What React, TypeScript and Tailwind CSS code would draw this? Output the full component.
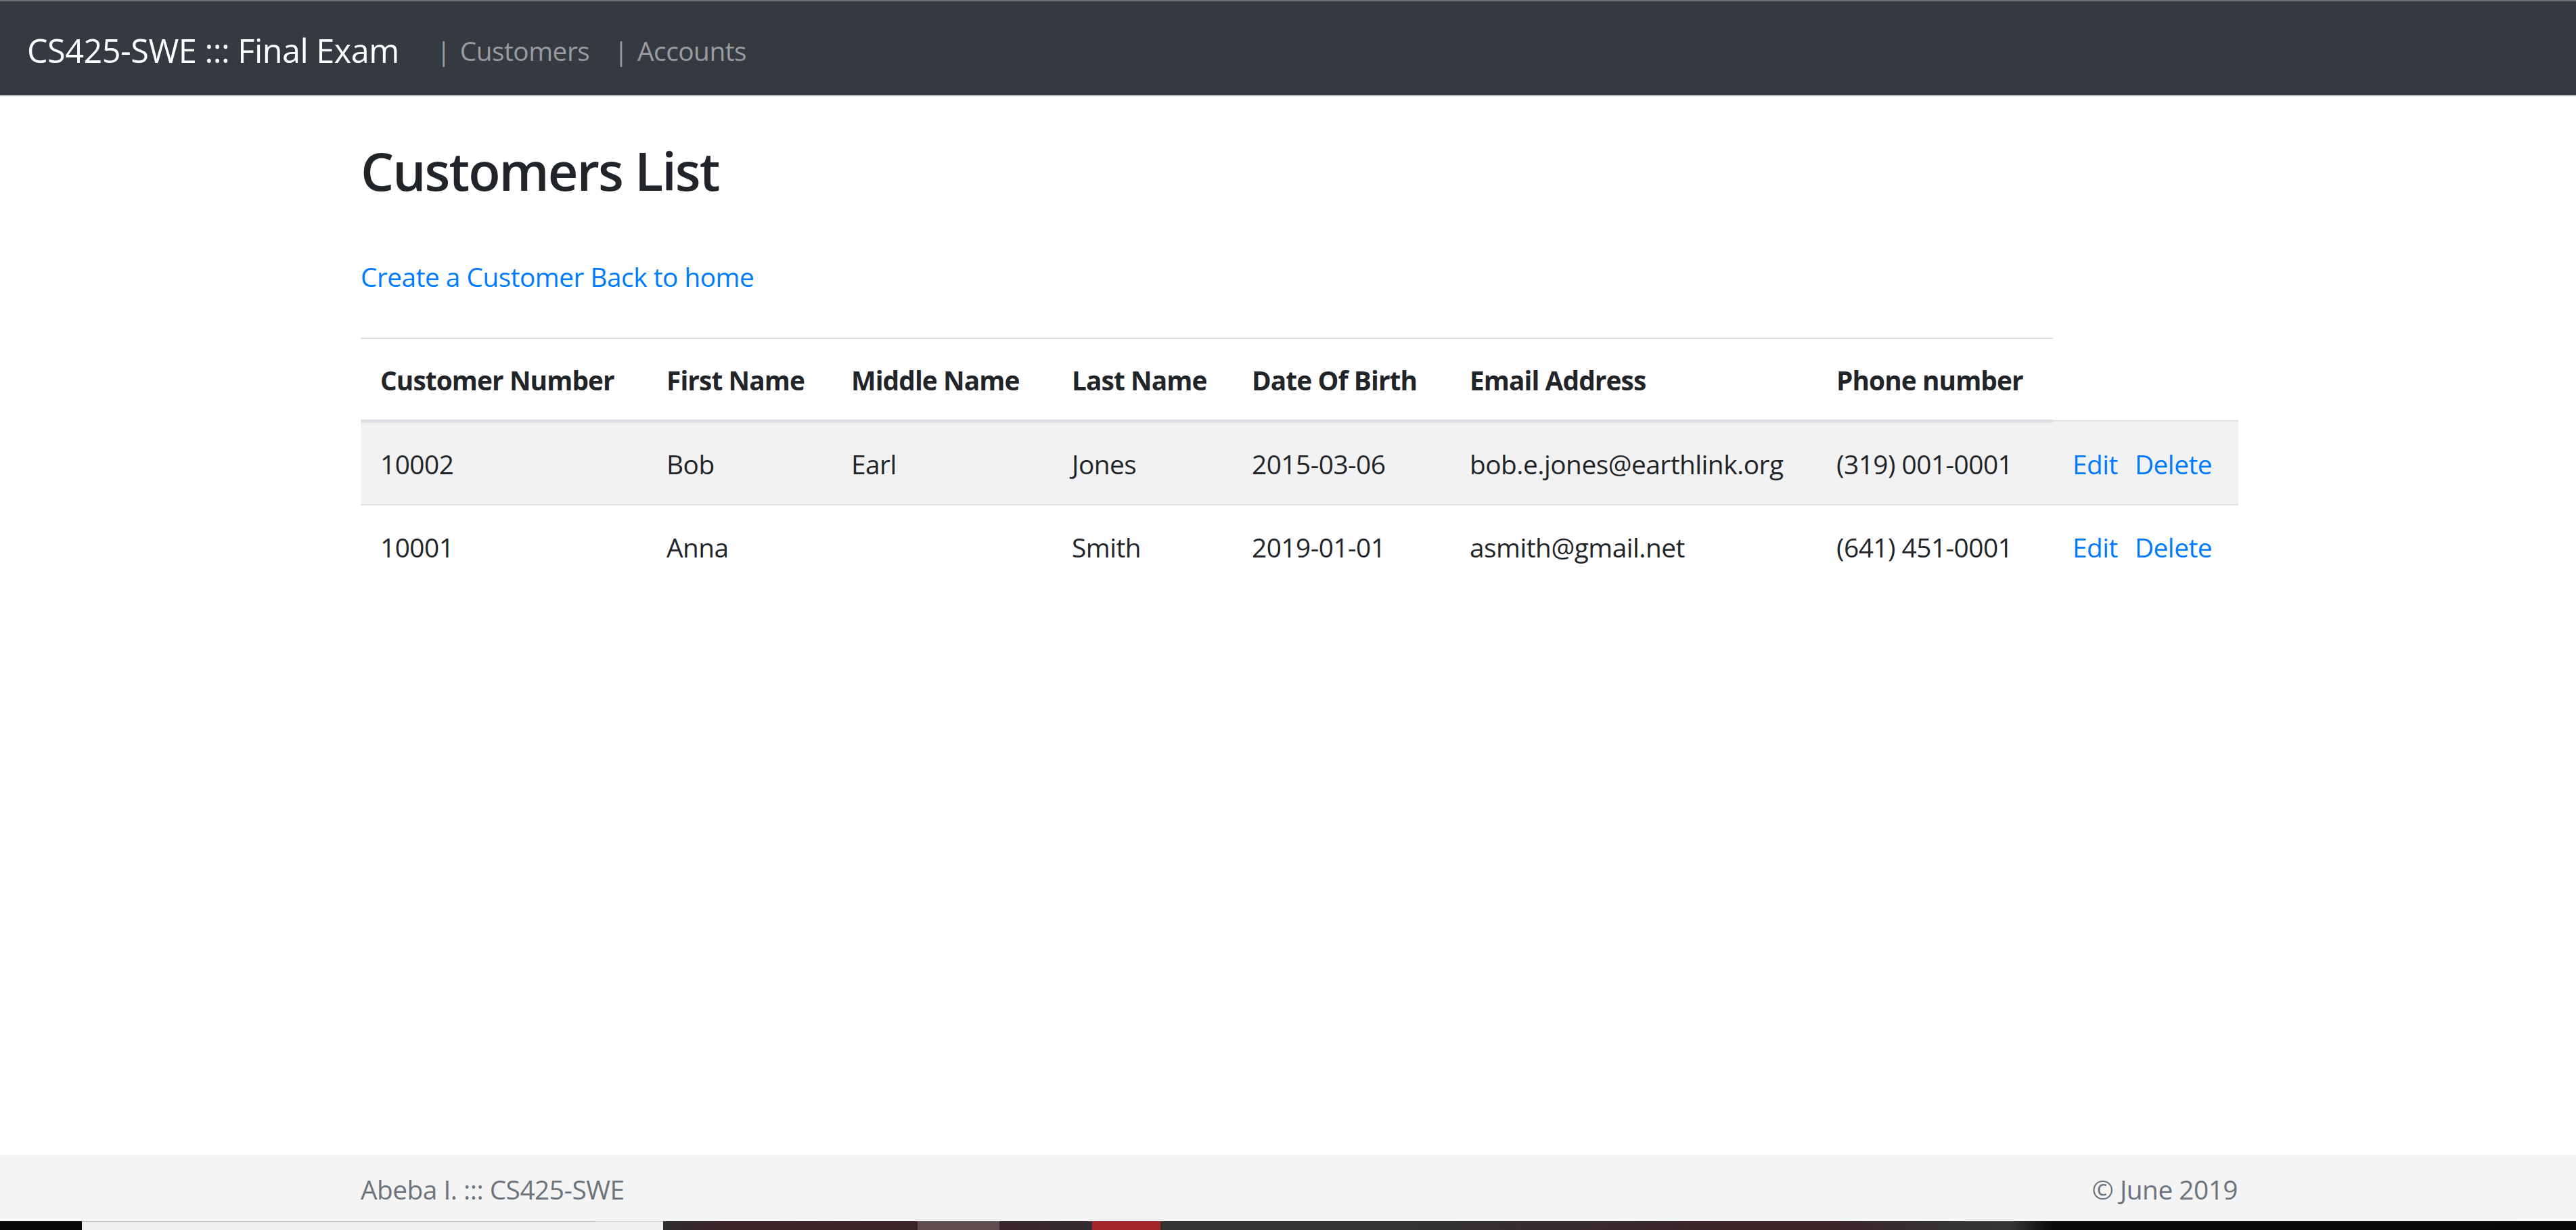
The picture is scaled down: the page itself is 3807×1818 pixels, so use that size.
import React from "react";

const colW = [
  "w-[423px]",
  "w-[273px]",
  "w-[326px]",
  "w-[266px]",
  "w-[322px]",
  "w-[542px]",
  "w-[349px]",
];

const headers = [
  "Customer Number",
  "First Name",
  "Middle Name",
  "Last Name",
  "Date Of Birth",
  "Email Address",
  "Phone number",
];

const rows = [
  ["10002", "Bob", "Earl", "Jones", "2015-03-06", "bob.e.jones@earthlink.org", "(319) 001-0001"],
  ["10001", "Anna", "", "Smith", "2019-01-01", "asmith@gmail.net", "(641) 451-0001"],
];

function Navbar() {
  return (
    <header className="shrink-0">
      <div className="h-[2px] bg-[#707173]" />
      <div className="h-[139px] bg-[#343a40] flex items-center pt-[6px] pl-[40px]">
        <a className="w-[605px] shrink-0 text-white text-[48.6px] leading-[73px] tracking-[-0.5px] whitespace-nowrap">
          CS425-SWE ::: Final Exam
        </a>
        <nav className="flex items-center text-[38.8px] leading-[58px] tracking-[-0.5px] text-[#9a9da0]">
          <span className="flex items-center gap-[14px]">
            <span>|</span>
            <span>Customers</span>
          </span>
          <span className="flex items-center gap-[14px] ml-[36px]">
            <span>|</span>
            <span>Accounts</span>
          </span>
        </nav>
      </div>
    </header>
  );
}

function Table() {
  return (
    <div className="w-[2775px] text-[38.8px] leading-[58px] tracking-[-0.5px] text-[#212529]">
      {/* header */}
      <div className="flex h-[126px]">
        <div className="flex border-t-2 border-b-[5px] border-[#dee2e6]">
          {headers.map((h, i) => (
            <div
              key={h}
              className={`${colW[i]} shrink-0 px-[29px] flex items-center pt-[3px] font-bold tracking-[-0.9px] whitespace-nowrap`}
            >
              {h}
            </div>
          ))}
        </div>
        <div className="w-[274px] shrink-0 flex flex-col">
          <div className="flex-1" />
          <div className="h-[2px] bg-[#dee2e6]" />
          <div className="h-[2px] bg-[#f2f2f2]" />
        </div>
      </div>
      {rows.map((r, ri) => (
        <div
          key={ri}
          className={
            ri === 0
              ? "flex h-[122px] bg-[#f2f2f2] border-b-2 border-[#dee2e6]"
              : "flex h-[122px]"
          }
        >
          {r.map((c, i) => (
            <div
              key={i}
              className={`${colW[i]} shrink-0 px-[29px] flex items-center pt-[1px] whitespace-nowrap`}
            >
              {c}
            </div>
          ))}
          <div className="w-[274px] shrink-0 px-[29px] flex items-center pt-[1px] gap-[25px] text-[#007bff]">
            <a>Edit</a>
            <a>Delete</a>
          </div>
        </div>
      ))}
    </div>
  );
}

function TaskStrip() {
  return (
    <div className="h-[13px] flex shrink-0">
      <div className="w-[121px] bg-[#080808]" />
      <div className="w-[859px] bg-[#f0f0f0] flex flex-col">
        <div className="h-[1px] flex">
          <div className="w-[758px] bg-[#bdbdbd]" />
          <div className="flex-1 bg-[#d2d2d2]" />
        </div>
      </div>
      <div className="w-[376px] bg-[linear-gradient(to_right,#2e2c2f_0%,#3b2227_25%,#3a2327_100%)]" />
      <div className="w-[121px] bg-[#604d50]" />
      <div className="w-[137px] bg-[linear-gradient(to_right,#38242a,#322b31)]" />
      <div className="w-[101px] bg-[#a52629]" />
      <div className="flex-1 bg-[linear-gradient(to_right,#333333_0%,#333333_18%,#3b2328_40%,#3b2328_47%,#343434_56%,#363636_60%,#0a0a0a_63%,#080808_100%)]" />
    </div>
  );
}

export default function App() {
  return (
    <div className="h-[1818px] w-[3807px] flex flex-col bg-white font-['Open_Sans',sans-serif] overflow-hidden">
      <Navbar />
      <main className="flex-1 pl-[533px]">
        <h2 className="mt-[65px] text-[77.7px] leading-[93px] font-semibold tracking-[-2px] text-[#212529]">
          Customers List
        </h2>
        <div className="mt-[81px] text-[38.8px] leading-[58px] tracking-[-0.5px] text-[#007bff]">
          <a>Create a Customer</a> <a>Back to home</a>
        </div>
        <div className="mt-[61px]">
          <Table />
        </div>
      </main>
      <footer className="h-[98px] bg-[#f4f4f4] shrink-0 pt-[22px]">
        <div className="ml-[533px] w-[2774px] flex justify-between text-[38.8px] leading-[58px] tracking-[-0.5px] text-[#6c757d]">
          <span>Abeba I. ::: CS425-SWE</span>
          <span>© June 2019</span>
        </div>
      </footer>
      <TaskStrip />
    </div>
  );
}
